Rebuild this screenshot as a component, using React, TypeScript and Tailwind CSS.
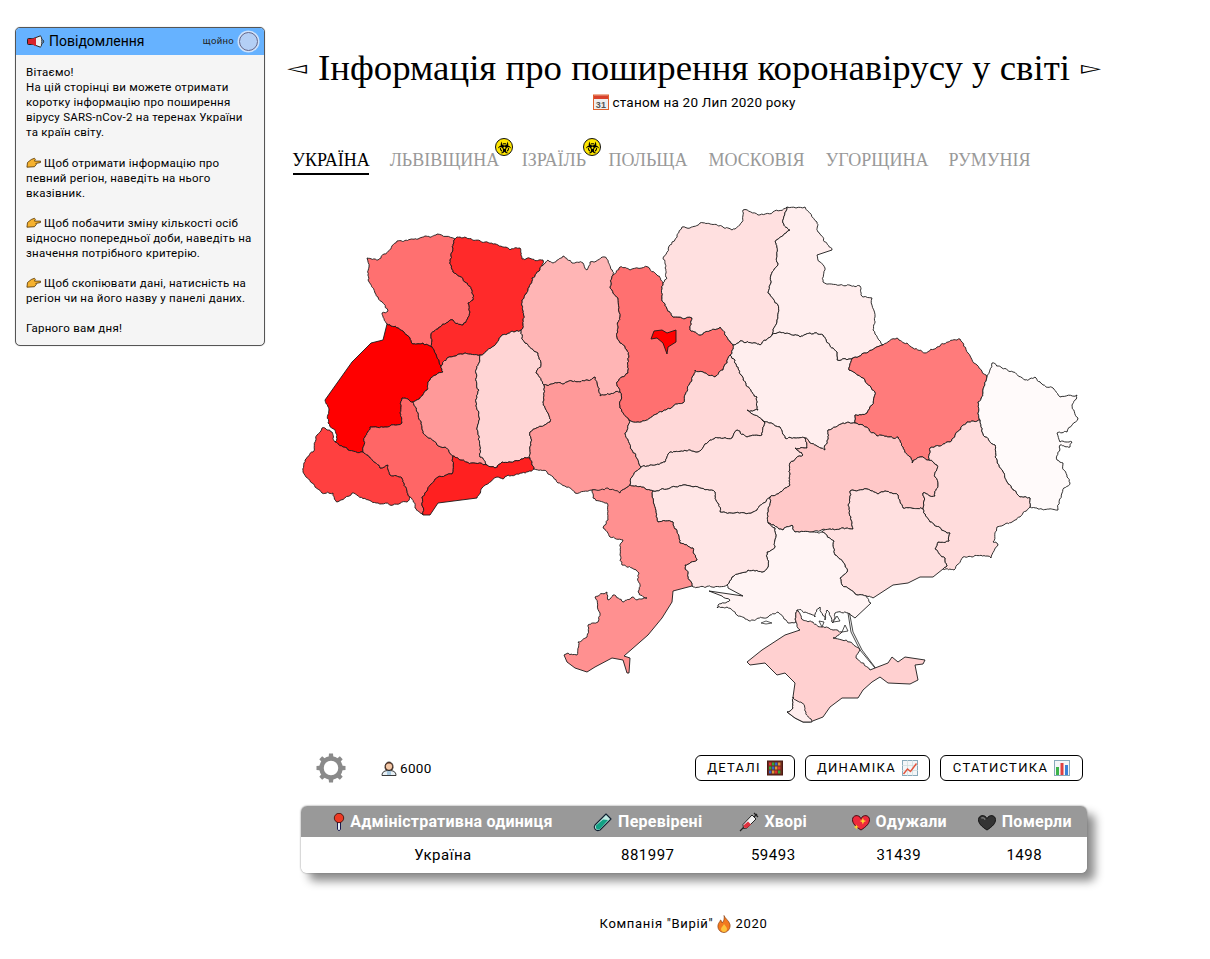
import { ReactNode } from 'react';
import { FaBiohazard } from 'react-icons/fa';

type Region = { name: string; fill: string; pts: string };

// border points are in page pixels, a "~" marks the edge that follows as smooth coast
const regions: Region[] = [
  { name: 'Волинська', fill: '#ff7070', pts: '367,258 378,260 397,241 418,239 437,234 455,239 450,260 453,272 465,282 472,290 473,300 468,303 470,312 463,325 453,320 440,327 431,335 432,347 423,343 413,344 407,335 398,328 387,324 382,313 388,311 378,297 368,280 369,267' },
  { name: 'Рівненська', fill: '#ff2a2a', pts: '455,239 460,237 485,242 498,245 510,250 520,248 522,259 543,260 540,268 532,278 528,290 522,300 523,320 521,330 502,335 492,347 480,355 465,353 447,358 441,366 434,350 432,347 431,335 440,327 453,320 463,325 470,312 468,303 473,300 472,290 465,282 453,272 450,260' },
  { name: 'Львівська', fill: '#ff0000', pts: '387,324 398,328 407,335 413,344 423,343 432,347 434,350 441,366 443,372 430,380 427,390 413,402 402,398 400,413 402,423 385,427 370,427 365,437 363,452 348,450 335,442 337,435 328,423 329,410 325,400~ 352,362~ 371,343~ 383,340~' },
  { name: 'Закарпатська', fill: '#ff4040', pts: '322,428 332,432 335,442 348,450 363,452 380,468 388,465 390,475 402,478 410,497 407,502 393,505 378,503 352,493 337,502 333,493 322,493 312,483 303,472 305,460 313,452 317,435' },
  { name: 'Івано-Франківська', fill: '#ff6666', pts: '370,427 385,427 402,423 400,413 402,398 413,402 422,427 423,433 437,445 445,447 453,456 452,474 438,477 422,497 423,515 415,508 410,497 402,478 390,475 388,465 380,468 363,452 365,437' },
  { name: 'Тернопільська', fill: '#ff9999', pts: '413,402 427,390 430,380 443,372 441,366 447,358 465,353 480,355 479,363 476,373 479,390 476,402 479,417 478,433 480,457 487,465 472,463 453,456 445,447 437,445 423,433 422,427' },
  { name: 'Хмельницька', fill: '#ffd5d5', pts: '480,355 492,347 502,335 521,330 525,343 538,353 541,365 536,373 544,385 543,402 548,413 550,422 530,432 530,458 502,462 495,468 487,465 480,457 478,433 479,417 476,402 479,390 476,373 479,363' },
  { name: 'Чернівецька', fill: '#ff2020', pts: '453,456 472,463 487,465 495,468 502,462 530,458 534,469 522,473 508,475 503,479 497,477 482,488 477,498~ 438,503~ 430,515~ 423,515 422,497 438,477 452,474' },
  { name: 'Житомирська', fill: '#ffb5b5', pts: '540,268 548,260 553,263 563,256 572,263 583,263 587,270 590,262 605,257 613,275 610,287 618,298 620,317 617,337 627,350 628,373 617,382 620,392 600,396 595,377 587,380 567,382 544,385 536,373 541,365 538,353 525,343 521,330 523,320 522,300 528,290 532,278' },
  { name: 'Вінницька', fill: '#ff9999', pts: '544,385 567,382 587,380 595,377 600,396 620,392 620,408 629,420 625,433 632,450 641,467 632,477 630,485 620,493 592,490 575,493 558,483 547,472 534,469 530,458 530,432 550,422 548,413 543,402' },
  { name: 'Київська', fill: '#ff7070', pts: '613,275 620,267 630,270 648,267 657,275 663,283 662,298 673,317 692,318 690,330 700,335 720,327 725,335 733,345 730,355 723,370 715,377 703,372 695,370 692,380 683,403 662,412 638,422 629,420 620,408 620,392 617,382 628,373 627,350 617,337 620,317 618,298 610,287' },
  { name: 'Чернігівська', fill: '#ffe0e0', pts: '690,228 700,223 723,227 732,230 742,222 743,210 758,215 787,207 783,223 790,230 775,242 778,263 771,275 768,293 778,305 777,320 772,335 760,345 740,341 733,345 725,335 720,327 700,335 690,330 692,318 673,317 662,298 663,283 667,278 663,258 672,242 682,227' },
  { name: 'Сумська', fill: '#ffeeee', pts: '787,207 805,207 817,222 818,232 832,250~ 817,255 825,268 823,282 840,285 860,286 863,297 872,298 875,317 873,330 883,345 853,358 837,360 837,352 823,335 810,333 800,337 780,332 772,335 777,320 778,305 768,293 771,275 778,263 775,242 790,230 783,223' },
  { name: 'Полтавська', fill: '#ffeeee', pts: '733,345 740,341 760,345 772,335 780,332 800,337 810,333 823,335 837,352 837,360 853,358 849,370 865,380 875,392 872,405 867,413 855,415 855,423 843,423 828,430 825,450 805,438 785,438 780,427 762,420 747,410 758,410 757,397 743,380 735,360 730,355' },
  { name: 'Харківська', fill: '#ff7b7b', pts: '853,358 883,345 897,338 907,343 913,348 925,353 937,347 960,339 968,353 977,365 987,377 983,393 978,402 980,420 967,422 950,442 930,448 929,460 920,457 912,463 898,437 877,436 863,425 855,423 855,415 867,413 872,405 875,392 865,380 849,370' },
  { name: 'Луганська', fill: '#fffafa', pts: '987,377 992,363 1002,368 1013,372 1025,380 1035,377 1043,385 1053,388 1060,397 1077,395 1072,405 1078,418 1067,432 1057,433 1060,442 1072,442 1070,447 1060,445 1057,460 1063,463 1067,477 1070,483 1062,493 1058,510 1037,508 1030,507 1030,498 1020,497 1007,482 1003,472 995,457 995,445 985,437 980,420 978,402 983,393' },
  { name: 'Черкаська', fill: '#ffd8d8', pts: '629,420 638,422 662,412 683,403 692,380 695,370 703,372 715,377 723,370 730,355 735,360 743,380 757,397 758,410 747,410 762,420 765,423 762,435 747,437 737,430 732,438 718,438 708,442 698,452 690,450 670,452 665,462 641,467 632,450 625,433' },
  { name: 'Кіровоградська', fill: '#ffe0e0', pts: '632,477 641,467 665,462 670,452 690,450 698,452 708,442 718,438 732,438 737,430 747,437 762,435 765,423 762,420 780,427 785,438 805,438 807,448 795,448 803,455 790,463 790,485 770,497 753,512 735,513 720,512 715,492 683,485 653,491 630,485' },
  { name: 'Дніпропетровська', fill: '#ffc8c8', pts: '790,463 803,455 795,448 807,448 805,438 825,450 828,430 843,423 855,423 863,425 877,436 898,437 912,463 920,457 929,460 937,465 935,477 938,485 935,496 923,493 923,509 903,508 898,495 885,491 878,494 867,489 850,491 848,505 853,529 830,529 812,532 795,532 792,525 783,530 768,523 770,497 790,485' },
  { name: 'Донецька', fill: '#ffdcdc', pts: '929,460 930,448 950,442 967,422 980,420 985,437 995,445 995,457 1003,472 1007,482 1020,497 1030,498 1030,507 1020,517 1015,520 997,527 993,542 998,544 991,558 987,556 963,557 954,570 943,569 947,566 945,558 935,549 938,542 949,541 950,533 930,522 923,509 923,493 935,496 938,485 935,477 937,465' },
  { name: 'Запорізька', fill: '#ffe0e0', pts: '850,491 867,489 878,494 885,491 898,495 903,508 923,509 930,522 950,533 949,541 938,542 935,549 945,558 947,566 943,569~ 933,577~ 920,577~ 908,583~ 893,585~ 873,598 863,595 857,595 842,585 840,578 847,572 845,565 835,555 834,541 822,532 830,529 853,529 848,505' },
  { name: 'Херсонська', fill: '#fff4f4', pts: '768,523 783,530 792,525 795,532 812,532 822,532 834,541 835,555 845,565 847,572 840,578 842,585 857,595 863,595 871,603~ 855,618~ 848,613 835,613 833,623 827,610 825,620 820,607 815,617 797,610 796,622 788,623 778,612 768,617 748,620 737,615 727,607 717,608 718,605 730,600 722,596~ 709,591~ 743,596~ 728,588 727,585 732,577 748,570 762,572 768,567 767,552 775,547 775,528' },
  { name: 'Миколаївська', fill: '#ffe6e6', pts: '653,491 683,485 715,492 720,512 735,513 753,512 770,497 768,523 775,528 775,547 767,552 768,567 762,572 748,570 732,577 727,585 712,587 692,586 685,565 697,560 693,548 680,543 673,522 658,522' },
  { name: 'Одеська', fill: '#ff9090', pts: '592,490 608,488 620,493 630,485 653,491 658,522 673,522 680,543 693,548 697,560 685,565 692,586~ 673,591~ 672,602~ 662,618~ 648,635~ 624,656~ 630,658~ 629,673~ 627,673~ 623,660~ 612,658~ 595,667~ 587,672~ 575,668~ 567,662~ 564,655~ 568,653 577,655 578,642 587,637 588,625 598,622 600,613 595,597 607,592 608,600 613,595 623,602 632,597 637,600 647,598 638,592 639,573 632,568 622,565 620,555 623,540 610,537 603,528 608,520 607,503 593,498' },
  { name: 'АР Крим', fill: '#ffd0d0', pts: '797,610 803,620 813,622 822,627 833,630 842,632 833,638 842,640 850,642 860,650 856,658 870,670~ 875,668~ 888,663~ 892,657~ 898,662~ 905,657~ 925,660~ 923,664~ 915,665~ 918,680~ 910,684~ 888,683~ 880,677~ 872,682~ 863,690~ 858,698~ 842,698~ 830,707~ 823,717~ 810,722~ 803,722~ 795,718~ 787,712 793,708 793,697~ 795,683~ 785,673~ 777,675~ 765,663~ 750,665~ 747,662~ 762,650~ 785,635~ 800,630 796,622' },
  { name: 'Севастополь', fill: '#ffeeee', pts: '787,712 793,708 793,697 802,703 806,712 812,722~ 803,722~ 795,718~' },
  { name: 'м. Київ', fill: '#ff0000', pts: '651,339~ 654,331~ 662,330~ 667,333~ 676,330~ 676,342~ 668,347~ 667,354~ 663,343~ 657,338~' },
];

function rng(seed: number) {
  let s = seed >>> 0 || 1;
  return () => {
    s = (Math.imul(s, 1664525) + 1013904223) >>> 0;
    return s / 4294967296 - 0.5;
  };
}

function wiggle(a: number[], b: number[]) {
  const flip = a[0] > b[0] || (a[0] === b[0] && a[1] > b[1]);
  const [p, q] = flip ? [b, a] : [a, b];
  const rand = rng(p[0] * 7919 + p[1] * 104729 + q[0] * 1299709 + q[1] * 15485863);
  let line = [p, q];
  for (let depth = 0; depth < 5; depth++) {
    const next: number[][] = [line[0]];
    for (let i = 1; i < line.length; i++) {
      const [x1, y1] = line[i - 1];
      const [x2, y2] = line[i];
      const len = Math.hypot(x2 - x1, y2 - y1);
      if (len > 2.5) {
        const amp = Math.min(len * 0.42, 2.2) * rand();
        next.push([(x1 + x2) / 2 - ((y2 - y1) / len) * amp, (y1 + y2) / 2 + ((x2 - x1) / len) * amp]);
      }
      next.push(line[i]);
    }
    line = next;
  }
  return flip ? line.reverse() : line;
}

function borderPath(pts: string) {
  const items = pts.split(' ').map((t) => ({
    p: t.replace('~', '').split(',').map(Number),
    smooth: t.endsWith('~'),
  }));
  let d = `M${items[0].p[0]} ${items[0].p[1]}`;
  items.forEach((it, i) => {
    const to = items[(i + 1) % items.length].p;
    const line = it.smooth ? [it.p, to] : wiggle(it.p, to);
    line.slice(1).forEach(([x, y]) => {
      d += `L${x.toFixed(1)} ${y.toFixed(1)}`;
    });
  });
  return d + 'Z';
}

function UkraineMap() {
  return (
    <svg viewBox="285 200 818 530" className="block h-[530px] w-[818px]">
      {regions.map((r) => (
        <path key={r.name} d={borderPath(r.pts)} fill={r.fill} stroke="#1a1a1a" strokeWidth="0.9" strokeLinejoin="round" />
      ))}
      {/* Арабатська стрілка */}
      <path d="M848 613 L851 632 L860 650 L875 668 M849.5 613 L853 632 L862 650 L875.5 668" fill="none" stroke="#333" strokeWidth="0.9" />
      <path d="M822 627l-3-6 5 1zM833 622l4-6 3 5zM842 632l3-7 3 6z" fill="#fff" stroke="#222" strokeWidth="0.8" />
      <path d="M761 623l5-2 6 2-6 1z" fill="#fff" stroke="#333" strokeWidth="0.8" />
    </svg>
  );
}

function Hand() {
  return (
    <svg viewBox="0 0 16 11" className="mr-[3px] inline-block h-[11px] w-[15px] align-[-1px]">
      <path d="M1 10.5l.6-5 4-3.2L9 1l1 1-1 2h6.5v1.5l-5 1 .5 1-2 2.5z" fill="#f5b12e" stroke="#5a3a05" strokeWidth="0.9" strokeLinejoin="round" />
    </svg>
  );
}

function Megaphone() {
  return (
    <svg viewBox="0 0 18 14" className="h-[14px] w-[18px]">
      <path d="M5 4l8-3c2.500-1 2.500 12 0 11L5 9z" fill="#eee" stroke="#222" />
      <rect x="0.500" y="3.500" width="5" height="6" rx="1" fill="#d8222a" stroke="#222" />
      <path d="M5 4l4-1.600v8.800L5 9z" fill="#d8222a" />
      <path d="M15.500 4.500c1.500 1 1.500 3 0 4" fill="none" stroke="#222" />
    </svg>
  );
}

function CalendarIcon() {
  return (
    <svg viewBox="0 0 16 16" className="h-4 w-4">
      <rect x="0.5" y="1" width="15" height="14.5" fill="#eee" stroke="#e0602a" />
      <rect x="1" y="1.5" width="14" height="3.5" fill="#d9412b" />
      <text x="8" y="13.5" textAnchor="middle" fontSize="9" fontWeight="700" fill="#555" fontFamily="Liberation Sans, sans-serif">31</text>
    </svg>
  );
}

function ScientistIcon() {
  return (
    <svg viewBox="0 0 16 16" className="h-4 w-4">
      <path d="M1 15.5c0-4 3-5 7-5s7 1 7 5z" fill="#e8f0f5" stroke="#222" strokeWidth="0.9" />
      <path d="M4 8c-1-8 9-8 8 0l-1 2H5z" fill="#6b3f2a" stroke="#222" strokeWidth="0.8" />
      <circle cx="8" cy="6.6" r="3.1" fill="#f4c9a8" />
      <path d="M7 11v4M9 11v4" stroke="#4a90c2" strokeWidth="0.8" />
    </svg>
  );
}

function AbacusIcon() {
  return (
    <svg viewBox="0 0 16 16" className="h-4 w-4">
      <rect x="0.5" y="1" width="15" height="14" fill="#6d2a1f" stroke="#4a1a12" />
      {[3, 6, 9, 12].map((x, i) => (
        <g key={x}>
          <rect x={x - 1} y="2.5" width="2.4" height="3" fill={['#d33', '#3a3', '#36c', '#d93'][i]} />
          <rect x={x - 1} y="6.5" width="2.4" height="3" fill={['#3a3', '#36c', '#d93', '#d33'][i]} />
          <rect x={x - 1} y="10.5" width="2.4" height="3" fill={['#36c', '#d93', '#d33', '#3a3'][i]} />
        </g>
      ))}
    </svg>
  );
}

function TrendIcon() {
  return (
    <svg viewBox="0 0 16 16" className="h-4 w-4">
      <rect x="0.5" y="0.5" width="15" height="15" fill="#f4f6f8" stroke="#8ab" />
      <path d="M0 5.5h16M0 10.5h16M5.5 0v16M10.5 0v16" stroke="#cdd" strokeWidth="0.7" />
      <path d="M1.5 14l4-5 3 2.5 6-8" fill="none" stroke="#e2543c" strokeWidth="1.4" />
    </svg>
  );
}

function BarsIcon() {
  return (
    <svg viewBox="0 0 16 16" className="h-4 w-4">
      <rect x="0.5" y="0.5" width="15" height="15" fill="#f4f6f8" stroke="#8ab" />
      <rect x="2" y="7" width="3" height="8" fill="#3cb44a" />
      <rect x="6.5" y="3" width="3" height="12" fill="#e04040" />
      <rect x="11" y="5" width="3" height="10" fill="#3a82d8" />
    </svg>
  );
}

function PinIcon() {
  return (
    <svg viewBox="0 0 12 18" className="h-[18px] w-[12px]">
      <path d="M4.500 9h3v7.500l-1.500 1.200-1.500-1.200z" fill="#e8eef5" stroke="#1a1a50" strokeWidth="1" />
      <circle cx="6" cy="5" r="4.700" fill="#ee3a24" stroke="#3a0a05" strokeWidth="0.8" />
    </svg>
  );
}

function TubeIcon() {
  return (
    <svg viewBox="0 0 20 20" className="h-[20px] w-[20px]">
      <path d="M13 2l5 5L7 18c-4 2-7-2-5-5z" fill="#bfe9e2" stroke="#123" strokeWidth="1.1" strokeLinejoin="round" />
      <path d="M10 7.5l5 .5-8 9c-3 2-5-1-4-3.5z" fill="#12a184" />
    </svg>
  );
}

function SyringeIcon() {
  return (
    <svg viewBox="0 0 20 20" className="h-[20px] w-[20px]">
      <path d="M13 3l4 4-9 9-3.5 .5-.5-4z" fill="#f2f2f2" stroke="#222" strokeWidth="1" strokeLinejoin="round" />
      <path d="M9 9.5l3 3-4 3.5-3-.2-.4-2.600z" fill="#e0323f" />
      <path d="M15 1l4 4M15 5l3-3M4.500 15.500L1 19" stroke="#222" strokeWidth="1.200" />
    </svg>
  );
}

function SparkHeartIcon() {
  return (
    <svg viewBox="0 0 20 18" className="h-[17px] w-[20px]">
      <path d="M10 17C4 13 1 10 1 6c0-5 7-6 9-1 2-5 9-4 9 1 0 4-3 7-9 11z" fill="#ee2a3c" stroke="#3a0a10" />
      <path d="M12 4l1 2.5 2.5 1-2.500 1-1 2.500-1-2.500-2.500-1 2.500-1zM5 11l.8 2 2 .8-2 .8-.8 2-.8-2-2-.8 2-.8z" fill="#ffd52e" />
    </svg>
  );
}

function BlackHeartIcon() {
  return (
    <svg viewBox="0 0 20 18" className="h-[17px] w-[20px]">
      <path d="M10 17C4 13 1 10 1 6c0-5 7-6 9-1 2-5 9-4 9 1 0 4-3 7-9 11z" fill="#333" stroke="#111" />
      <path d="M4 4.5c1.5-1 3-.5 4 1.5" fill="none" stroke="#777" strokeWidth="1.6" />
    </svg>
  );
}

function FireIcon() {
  return (
    <svg viewBox="0 0 14 18" className="h-[18px] w-[14px]">
      <path d="M7 .5c1 3 5 5 6 9 .8 4-2.500 8-6 8s-6.800-3-6-7.500c.5-2.500 2-3 2.500-5 1 .5 1.500 1.500 1.500 3C7 7 7.500 3 7 .5z" fill="#f2791f" stroke="#7a3408" strokeWidth="0.6" />
      <path d="M7 9c1 2 3 3 3 5s-1.500 3-3 3-3-1-3-3 2.500-3 3-5z" fill="#fcc23c" />
    </svg>
  );
}

function GearIcon() {
  return (
    <svg viewBox="0 0 32 32" className="h-8 w-8">
      {[0, 45, 90, 135, 180, 225, 270, 315].map((a) => (
        <path key={a} d="M13.500 7L14 1.500h4L18.500 7z" fill="#8a8a8a" transform={`rotate(${a} 16 16)`} />
      ))}
      <circle cx="16" cy="16" r="9.500" fill="none" stroke="#8a8a8a" strokeWidth="4.500" />
    </svg>
  );
}

function BioBadge() {
  return (
    <span className="absolute -right-[13px] -top-[10px] flex h-[18px] w-[18px] items-center justify-center rounded-full border-[1.5px] border-[#111] bg-[#ffe600]">
      <FaBiohazard className="h-[13px] w-[13px] text-black" />
    </span>
  );
}

const tabs = [
  { title: 'Україна', width: 'w-[76px]', active: true },
  { title: 'Львівщина', width: 'w-[111px]', badge: true },
  { title: 'Ізраїль', width: 'w-[68px]', badge: true },
  { title: 'Польща', width: 'w-[80px]' },
  { title: 'Московія', width: 'w-[97px]' },
  { title: 'Угорщина', width: 'w-[104px]' },
  { title: 'Румунія', width: 'w-[81px]' },
];

const stats: { icon: ReactNode; title: string; value: string }[] = [
  { icon: <PinIcon />, title: 'Адміністративна одиниця', value: 'Україна' },
  { icon: <TubeIcon />, title: 'Перевірені', value: '881997' },
  { icon: <SyringeIcon />, title: 'Хворі', value: '59493' },
  { icon: <SparkHeartIcon />, title: 'Одужали', value: '31439' },
  { icon: <BlackHeartIcon />, title: 'Померли', value: '1498' },
];

const actions: { label: string; icon: ReactNode; width: string }[] = [
  { label: 'Деталі', icon: <AbacusIcon />, width: 'w-[100px]' },
  { label: 'Динаміка', icon: <TrendIcon />, width: 'w-[125px]' },
  { label: 'Статистика', icon: <BarsIcon />, width: 'w-[143px]' },
];

export default function App() {
  return (
    <div className="flex h-[959px] overflow-hidden bg-white font-['Roboto',sans-serif] text-black">
      <aside className="ml-[15px] mt-[27px] h-[319px] w-[250px] shrink-0 overflow-hidden rounded-[5px] border border-[#555] bg-[#f5f5f5] shadow-[0_0_1px_#999]">
        <div className="flex h-[27px] items-center bg-[#66b2ff] pl-[11px] pr-[6px]">
          <Megaphone />
          <span className="ml-[4px] text-[14px]">Повідомлення</span>
          <span className="ml-auto mr-[5px] text-[9.5px] tracking-[0.3px] text-[#222]">щойно</span>
          <span className="h-[19px] w-[19px] rounded-full border border-[#668] bg-[#b4cff5] shadow-[0_0_0_1.5px_#cfe2fb]" />
        </div>
        <div className="px-[10px] pt-[10px] text-[11.5px] leading-[15px] tracking-[0.24px]">
          <p>Вітаємо!</p>
          <p>На цій сторінці ви можете отримати коротку інформацію про поширення вірусу SARS-nCov-2 на теренах України та країн світу.</p>
          <p className="mt-[16px]"><Hand />Щоб отримати інформацію про певний регіон, наведіть на нього вказівник.</p>
          <p className="mt-[15px]"><Hand />Щоб побачити зміну кількості осіб відносно попередньої доби, наведіть на значення потрібного критерію.</p>
          <p className="mt-[15px]"><Hand />Щоб скопіювати дані, натисність на регіон чи на його назву у панелі даних.</p>
          <p className="mt-[15px]">Гарного вам дня!</p>
        </div>
      </aside>

      <main className="ml-[20px] flex w-[818px] shrink-0 flex-col">
        <h1 className="mt-[46px] flex h-[44px] items-center justify-center font-['Liberation_Serif',serif] text-[36.8px] font-normal leading-[44px]">
          <span className="inline-block scale-y-[0.7] font-['DejaVu_Sans',sans-serif] text-[26px]">◅</span>
          <span className="mx-[11px]">Інформація про поширення коронавірусу у світі</span>
          <span className="inline-block scale-y-[0.7] font-['DejaVu_Sans',sans-serif] text-[26px]">▻</span>
        </h1>
        <div className="mt-[2px] flex h-[20px] items-center justify-center gap-[4px] text-[13.5px] tracking-[0.2px]">
          <CalendarIcon />
          <span>станом на 20 Лип 2020 року</span>
        </div>

        <nav className="ml-[8px] mt-[36px] flex h-[34px] gap-[20px] font-['Liberation_Serif',serif] text-[18px] uppercase leading-[24px]">
          {tabs.map((t) => (
            <a
              key={t.title}
              className={`relative box-content flex h-[24px] justify-center whitespace-nowrap pb-[1px] ${t.width} ${t.active ? 'border-b-2 border-black text-black' : 'text-[#999]'}`}
            >
              {t.title}
              {t.badge && <BioBadge />}
            </a>
          ))}
        </nav>

        <div className="mt-[18px]">
          <UkraineMap />
        </div>

        <div className="mt-[25px] flex h-[26px] items-center pl-[30px] pr-[20px]">
          <GearIcon />
          <div className="ml-[34px] flex items-center gap-[3px] text-[13.5px] tracking-[0.3px]">
            <ScientistIcon />
            <span>6000</span>
          </div>
          <div className="ml-auto flex gap-[10px]">
            {actions.map((a) => (
              <button
                key={a.label}
                type="button"
                className={`flex h-[26px] items-center justify-center gap-[6px] rounded-[6px] border border-black text-[13px] uppercase tracking-[1.3px] ${a.width}`}
              >
                {a.label} {a.icon}
              </button>
            ))}
          </div>
        </div>

        <div className="ml-[16px] mt-[25px] w-[786px] overflow-hidden rounded-[6px] shadow-[0_0_2px_#777,8px_8px_10px_rgba(0,0,0,0.45)]">
          <div className="grid h-[31px] grid-cols-[284px_repeat(4,1fr)] items-center bg-[#999] pt-[1px] text-[16px] font-bold tracking-[0.25px] text-white">
            {stats.map((s) => (
              <div key={s.title} className="flex items-center justify-center gap-[5px]">
                {s.icon}
                <span>{s.title}</span>
              </div>
            ))}
          </div>
          <div className="grid h-[36px] grid-cols-[284px_repeat(4,1fr)] items-center bg-white pt-[1px] text-[15px] tracking-[0.5px]">
            {stats.map((s) => (
              <div key={s.title} className="text-center">{s.value}</div>
            ))}
          </div>
        </div>

        <footer className="mt-[41px] flex items-center justify-center gap-[4px] pr-[21px] text-[13px] tracking-[0.7px]">
          <span>Компанія "Вирій"</span>
          <FireIcon />
          <span>2020</span>
        </footer>
      </main>
    </div>
  );
}
